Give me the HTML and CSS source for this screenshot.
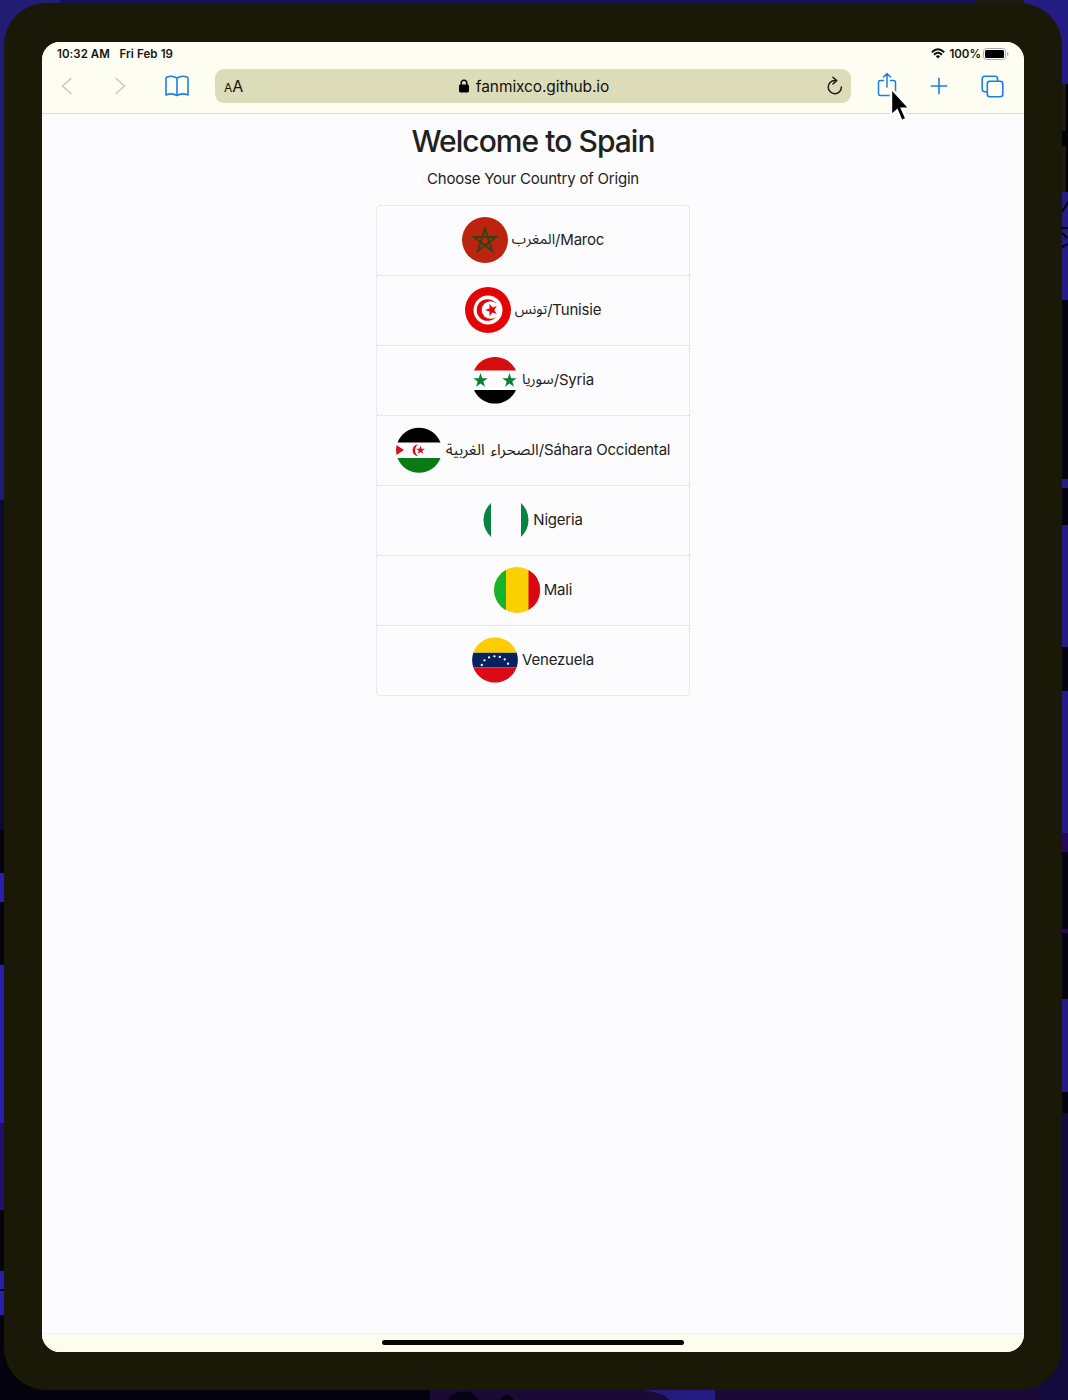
FILE: index.html
```html
<!DOCTYPE html>
<html lang="en">
<head>
<meta charset="utf-8">
<title>Welcome to Spain</title>
<link rel="stylesheet" href="styles.css">
</head>
<body>
<svg class="wallpaper" width="1068" height="1400" viewBox="0 0 1068 1400" aria-hidden="true">
  <rect width="1068" height="1400" fill="#04030f"/>
  <rect width="1068" height="60" fill="#151152"/>
  <rect width="60" height="500" fill="#211d72"/>
  <rect y="500" width="10" height="330" fill="#0c0933"/>
  <path fill="#2a1fae" d="M0 873h10v29H0zM0 965h10v158H0zM0 1271h10v18H0zM0 1291h10v24H0z"/>
  <path fill="#22106c" d="M0 1123h10v87H0z"/>
  <path fill="#1c1a12" d="M976 0h48v8h-48z"/>
  <path fill="#231d83" d="M1024 0h44v300h-44zM1060 479h8v9h-8zM1060 525h8v122h-8zM1060 691h8v142h-8zM1060 999h8v93h-8z"/>
  <path fill="#25085c" d="M1060 833h8v19h-8zM1060 929h8v4h-8z"/>
  <path fill="#130a3d" d="M1020 1113h48v287h-48z"/>
  <path fill="#1a0a35" d="M430 1388h610v12H430z"/>
  <path fill="#241b80" d="M641 1390h74v10h-46q-4-7-28-10z"/>
  <path fill="#04030f" d="M448 1400q4-10 22-8l10 8zM500 1400q6-10 14 0z"/>
  <rect x="1060" y="84" width="8" height="108" fill="#020204"/>
  <path fill="#1c1a12" d="M1060 84h6v47h-6zM1060 146h6v46h-6z"/>
  <path fill="none" stroke="#05030c" stroke-width="2" d="M1062 212l6-10M1062 228h6M1062 233l5 5M1062 247l6-3"/>
</svg>
<main class="tablet">
  <div class="screen">
    <header class="chrome">
      <div class="status">
        <span class="time">10:32 AM</span>
        <span class="date">Fri Feb 19</span>
        <svg class="wifi" width="14" height="11" viewBox="0 0 14 11"><g fill="none" stroke="#111" stroke-width="1.9"><path d="M.8 4.2Q7-1.8 13.200 4.200"/><path d="M3 6.700Q7 2.800 11 6.700"/></g><path fill="#111" d="M4.800 8.200Q7 6.200 9.200 8.200L7 10.500z"/></svg>
        <span class="percent">100%</span>
        <svg class="battery" width="26" height="12" viewBox="0 0 26 12"><rect x=".5" y=".5" width="22" height="11" rx="3" fill="#fff" stroke="#aaa"/><rect x="2" y="2" width="19" height="8" rx="1.500"/><path d="M24 4q1.500.5 1.500 2T24 8z" fill="#aaa"/></svg>
      </div>
      <nav class="toolbar">
        <svg width="54" height="34" viewBox="0 0 54 34" fill="none" stroke="#c9c9bd" stroke-width="1.500"><path d="M29.500 9 20.500 17l9 8"/></svg>
        <svg width="54" height="34" viewBox="0 0 54 34" fill="none" stroke="#c9c9bd" stroke-width="1.500"><path d="M19.500 9l9 8-9 8"/></svg>
        <svg width="65" height="34" viewBox="11 0 65 34" fill="none" stroke="#1a7fe5" stroke-width="1.600" stroke-linejoin="round"><path d="M27 9.500q0-1 1-1.500 5-2 10 1 5-3 10-1 1 .5 1 1.500V26q-6-2.500-11 .5-5-3-11-.5zM38 9v17.500"/></svg>
        <div class="address">
          <span class="reader"><small>A</small>A</span>
          <span class="site">
            <svg width="10" height="14" viewBox="0 0 10 14"><rect y="5.500" width="10" height="8" rx="1.400"/><path d="M2.200 6V4a2.800 2.800 0 0 1 5.600 0v2" fill="none" stroke="#000" stroke-width="1.500"/></svg>
            <span class="domain">fanmixco.github.io</span>
          </span>
          <svg class="reload" width="18" height="22" viewBox="0 0 18 22" fill="none" stroke="#1c1c1c" stroke-width="1.500" stroke-linecap="round" stroke-linejoin="round"><path d="M8.700 5.500a6.600 6.600 0 1 0 6.700 6.500M6.900 2.200 10.700 5.600 6.900 9"/></svg>
        </div>
        <svg class="share" width="20" height="26" viewBox="0 0 20 26" fill="none" stroke="#1a7fe5" stroke-width="1.500" stroke-linecap="round" stroke-linejoin="round"><path d="M6.500 8.500H3.500Q1.500 8.500 1.500 10.500V21.500q0 2 2 2h13q2 0 2-2v-11q0-2-2-2h-3M10 15V1.500M6.500 5 10 1.500 13.500 5"/></svg>
        <svg class="plus" width="18" height="18" viewBox="0 0 18 18" stroke="#1a7fe5" stroke-width="1.600"><path d="M9 .8v16.400M.8 9h16.400"/></svg>
        <svg class="tabs" width="23" height="23" viewBox="0 0 23 23" fill="none" stroke="#1a7fe5" stroke-width="1.600"><rect x="6.300" y="6.200" width="15.500" height="15.500" rx="2.500"/><path d="M6 16.800H4Q1.200 16.800 1.200 14V4Q1.200 1.200 4 1.200H14Q16.600 1.200 16.600 4V6"/></svg>
      </nav>
    </header>
    <section class="page">
      <h1>Welcome to Spain</h1>
      <p class="prompt">Choose Your Country of Origin</p>
      <ul class="countries">
        <li><svg class="flag" viewBox="0 0 46 46"><circle cx="23" cy="23" r="23" fill="#bd2410"/><path d="M23 11.500l7 22.300L12 20h22L16 33.800z" fill="none" stroke="#344016" stroke-width="2"/></svg><span class="name"><bdi lang="ar">المغرب</bdi>/Maroc</span></li>
        <li><svg class="flag" viewBox="0 0 46 46"><circle cx="23" cy="23" r="23" fill="#e30505"/><circle cx="23" cy="23" r="14.500" fill="#fff"/><circle cx="22.500" cy="23" r="10.800" fill="#e30505"/><circle cx="25.500" cy="23" r="8.800" fill="#fff"/><path fill="#e30505" d="M20 23l4.500-1.500V16.800l2.900 3.700 4.400-1.400-2.600 3.900 2.600 3.900-4.400-1.400-2.900 3.700v-4.700z"/></svg><span class="name tunisie"><bdi lang="ar">تونس</bdi>/Tunisie</span></li>
        <li><svg class="flag" viewBox="0 0 46 46"><path fill="#d60d0d" d="M2 13.500a23 23 0 0 1 42 0z"/><path d="M2 33a23 23 0 0 0 42 0z"/><path id="star" fill="#078034" d="M8.500 16l1.700 5.200h5.500l-4.400 3.200 1.700 5.300-4.500-3.300L4 29.700l1.700-5.300-4.400-3.200h5.500z"/><use href="#star" x="29"/></svg><span class="name"><bdi lang="ar">سوريا</bdi>/Syria</span></li>
        <li><svg class="flag" viewBox="0 0 46 46"><path d="M1.500 15.500a23 23 0 0 1 43 0z"/><path fill="#087b16" d="M1.500 31a23 23 0 0 0 43 0z"/><path fill="#cc1720" d="M.5 18Q-.5 23 .5 28L8 23zM22.500 17.200a6 6 0 1 0 0 12 7 7 0 0 1 0-12z"/><path fill="#cc1720" d="M24.500 18.500l1.100 3.300H29l-2.700 2 1 3.300-2.800-2-2.800 2 1-3.300-2.700-2h3.400z"/></svg><span class="name sahara"><bdi lang="ar">الصحراء الغربية</bdi>/Sáhara Occidental</span></li>
        <li><svg class="flag" viewBox="0 0 46 46"><path fill="#078444" d="M8 6a23 23 0 0 0 0 34zM38 6a23 23 0 0 1 0 34z"/></svg><span class="name">Nigeria</span></li>
        <li><svg class="flag" viewBox="0 0 46 46"><circle cx="23" cy="23" r="23" fill="#fbd000"/><path fill="#15b42c" d="M12 2.800a23 23 0 0 0 0 40.400z"/><path fill="#d80713" d="M34.500 3a23 23 0 0 1 0 40z"/></svg><span class="name">Mali</span></li>
        <li><svg class="flag" viewBox="0 0 46 46"><path fill="#082260" d="M1.400 15.500h43.200a23 23 0 0 1 0 15H1.400a23 23 0 0 1 0-15z"/><path fill="#fbcd00" d="M1.400 15.500a23 23 0 0 1 43.200 0z"/><path fill="#dc0a16" d="M1.400 30.500a23 23 0 0 0 43.200 0z"/><path fill="none" stroke="#fff" stroke-width="2.300" stroke-linecap="round" stroke-dasharray="0 5.450" d="M9.800 28a13.500 10.500 0 0 1 26.600 0"/></svg><span class="name">Venezuela</span></li>
      </ul>
    </section>
    <footer class="home"><div class="handle"></div></footer>
  </div>
</main>
<svg class="pointer" width="26" height="42" viewBox="0 0 26 42" aria-hidden="true"><path d="M3 4v28l6-5.500 4.500 10.500 5-2.200-4.500-10H22z" stroke="#fff" stroke-width="2.400"/></svg>
</body>
</html>
```
FILE: styles.css
```css
* { box-sizing: border-box; }
html { background: #04030f; }
body {
  margin: 0;
  width: 1068px;
  height: 1400px;
  overflow: hidden;
  position: relative;
  padding: 3px 6px 10px 4px;
  font-family: Inter, "Liberation Sans", sans-serif;
  color: #22221c;
}
.wallpaper { position: absolute; left: 0; top: 0; z-index: -1; }
.tablet {
  height: 1387px;
  padding: 39px 38px 38px;
  border-radius: 42px;
  background: #1a1908;
}
.screen {
  height: 1310px;
  display: flex;
  flex-direction: column;
  overflow: hidden;
  border-radius: 18px;
  background: #fcfcfe;
}
.chrome {
  height: 72px;
  background: #fdfdf1;
  border-bottom: 1px solid #dcdccc;
}
.status {
  display: flex;
  align-items: center;
  height: 23px;
  padding: 0 15px 0 15px;
  font-size: 11.5px;
  font-weight: 600;
  color: #151510;
  white-space: nowrap;
}
.time { width: 62.5px; letter-spacing: .05px; }
.date { margin-right: auto; letter-spacing: .1px; }
.wifi { margin-right: 4px; }
.percent { margin-right: 2px; letter-spacing: 0; }
.toolbar { display: flex; align-items: center; height: 34px; margin-top: 4px; }
.address {
  display: flex;
  align-items: center;
  width: 636px;
  height: 34px;
  padding: 0 7px 0 9px;
  border-radius: 9px;
  background: #dddcb9;
  color: #11110c;
}
.reader { width: 40px; font-size: 16px; }
.reader small { font-size: 12px; }
.site { flex: 1; display: flex; justify-content: center; align-items: center; gap: 7px; padding-right: 22px; }
.domain { font-size: 15.5px; letter-spacing: -.1px; }
.share { margin: 0 0 2px 26px; }
.plus { margin-left: 33px; }
.tabs { margin-left: 33px; }
.page { flex: 1; display: flex; flex-direction: column; align-items: center; }
h1 {
  margin: 7px 0 0;
  font-size: 30px;
  line-height: 40px;
  font-weight: 500;
  letter-spacing: -.95px;
}
.prompt { margin: 6px 0 14px; font-size: 15px; line-height: 24px; letter-spacing: -.21px; }
.countries {
  width: 314px;
  margin: 0;
  padding: 0;
  list-style: none;
  border: 1px dotted #d6d4df;
  border-radius: 4px;
}
.countries li {
  display: flex;
  align-items: center;
  justify-content: center;
  gap: 4px;
  height: 70px;
  padding-bottom: 1px;
  border-bottom: 1px dotted #d6d4df;
}
.countries li:last-child { height: 69px; border-bottom: 0; }
.flag { width: 46px; height: 46px; overflow: visible; }
.name {
  display: flex;
  align-items: center;
  height: 20px;
  margin-top: -1px;
  font-size: 15px;
  letter-spacing: -.2px;
  white-space: nowrap;
}
.name bdi { font-family: "Noto Sans Arabic", "DejaVu Sans", sans-serif; font-size: 14.5px; letter-spacing: 0; }
.tunisie bdi { font-size: 14px; }
.sahara bdi { font-size: 15.5px; word-spacing: 2px; }
.home {
  height: 19px;
  padding-top: 6px;
  background: #fdfdef;
  border-top: 1px solid #f2f1f3;
}
.handle { width: 302px; height: 5px; margin: 0 auto; border-radius: 3px; background: #050503; }
.pointer { position: absolute; left: 888px; top: 84px; }
```
